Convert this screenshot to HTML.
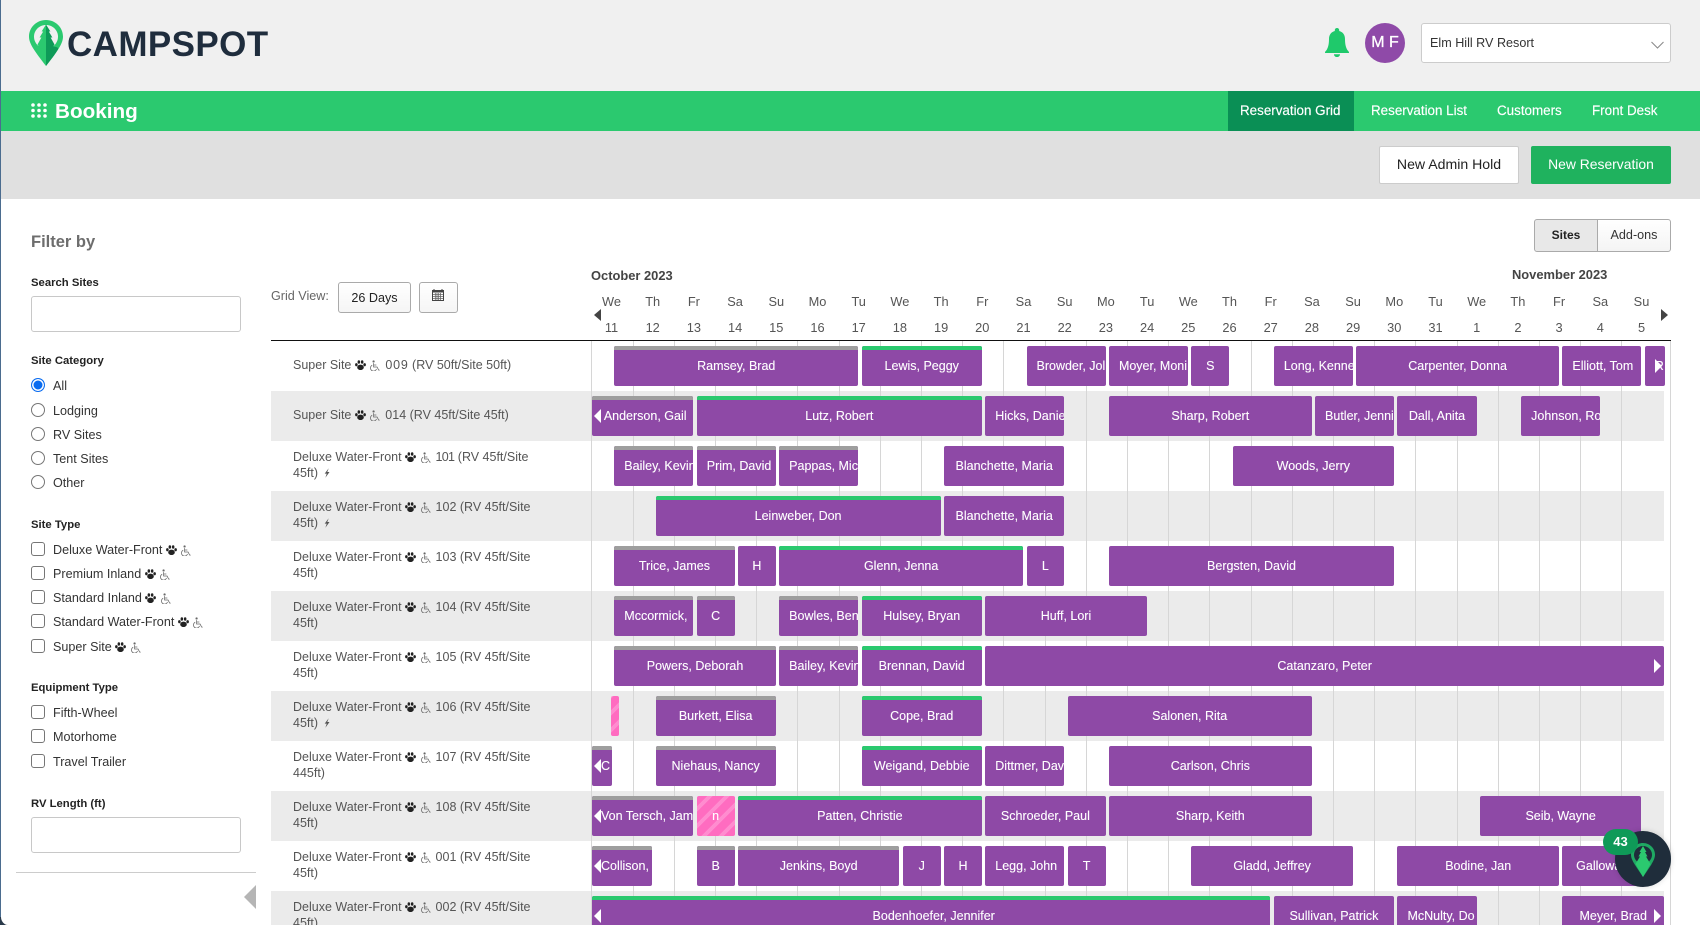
<!DOCTYPE html>
<html lang="en"><head><meta charset="utf-8"><title>Campspot Booking</title>
<style>
*{box-sizing:border-box}
html,body{margin:0;padding:0;width:1700px;height:925px;overflow:hidden}
body{position:relative;background:#fff;font-family:"Liberation Sans",sans-serif;font-size:12.6px;color:#333}
.a{position:absolute}
.t{position:absolute;white-space:nowrap;line-height:16px;height:16px}
.hd{left:1px;top:0;width:1699px;height:91px;background:#f0f0f0}
.gb{left:1px;top:91px;width:1699px;height:40px;background:#2bc96f}
.sb{left:1px;top:131px;width:1699px;height:68px;background:#e0e0e0}
.nav{color:#fff;font-size:13.4px;top:103px;-webkit-text-stroke:.15px #fff}
.btn{position:absolute;top:146px;height:38px;border-radius:2px;font:14.1px "Liberation Sans",sans-serif;text-align:center;padding:0 0 2px}
.lb{position:absolute;left:31px;font-weight:bold;font-size:11.3px;line-height:14px;height:14px;color:#222;white-space:nowrap}
.fi{position:absolute;left:31px;width:210px;height:36px;border:1px solid #c8c8c8;border-radius:3px;background:#fff;padding:0}
input[type=radio],input[type=checkbox]{appearance:none;-webkit-appearance:none;position:absolute;left:31px;width:14px;height:14px;margin:0;background:#fff;border:1px solid #767676}
input[type=radio]{border-radius:50%}
input[type=checkbox]{border-radius:3px}
input[type=radio]:checked{border:1.5px solid #0a6cf0;box-shadow:inset 0 0 0 1.5px #fff;background:#0a6cf0}
.o{position:absolute;left:53px;line-height:16px;height:16px;white-space:nowrap;color:#333}
.ic{display:inline-block;vertical-align:-1px}
.p{width:11px;height:10.5px;margin:0}
.w{width:11px;height:11.5px;margin:0 1.5px 0 0;vertical-align:-2px}
.z{width:6px;height:10px;margin-left:2px}
.d{position:absolute;width:40px;text-align:center;line-height:16px;color:#555;font-size:12.8px;margin-left:-20px;left:calc(611.5px + var(--i)*41.2px)}
.r{position:absolute;left:271px;width:1393px;height:50px}
.gr{background:#ebebeb}
.l{position:absolute;left:293px;line-height:16px;color:#555;white-space:nowrap;font-size:12.5px}
.v{position:absolute;top:341px;height:584px;width:1px;background:#d6d6d6;left:calc(591.4px + var(--i)*41.2px)}
.b{position:absolute;height:40px;top:var(--y);left:calc(614.3px + var(--s)*41.22px);width:calc((var(--e) - var(--s))*41.22px - 3.4px);background:#8e49a6;border-radius:2px;color:#fff;line-height:40px;text-align:center;white-space:nowrap;overflow:hidden;padding:0 10px;font-size:12.5px;-webkit-text-stroke:.1px #fff}
.g::before,.n::before{content:"";position:absolute;left:0;right:0;top:0;height:4px}
.g::before{background:#9e9e9e}
.n::before{background:#2bc96f}
.la{padding-left:9px;padding-right:4px}
.la::after{content:"";position:absolute;left:2px;top:13px;border:7px solid transparent;border-left:0;border-right:7px solid #fff}
.ra::after{content:"";position:absolute;right:3px;top:13px;border:7px solid transparent;border-right:0;border-left:7px solid #fff}
.k{background:#ff6cc0 repeating-linear-gradient(-45deg,#ff6cc0 0,#ff6cc0 8px,#ff8ccf 8px,#ff8ccf 12px)}
</style></head><body>
<svg width="0" height="0" style="position:absolute">
<defs>
<symbol id="paw" viewBox="0 0 12 11"><ellipse cx="6" cy="7.800" rx="3.600" ry="3" fill="#222"/><ellipse cx="1.500" cy="4.900" rx="1.400" ry="1.700" fill="#222"/><ellipse cx="4.200" cy="2" rx="1.400" ry="1.900" fill="#222"/><ellipse cx="7.800" cy="2" rx="1.400" ry="1.900" fill="#222"/><ellipse cx="10.500" cy="4.900" rx="1.400" ry="1.700" fill="#222"/></symbol>
<symbol id="whl" viewBox="0 0 12 12"><circle cx="5" cy="1.300" r="1.200" fill="#666"/><path d="M5 3.200V7.400H8.800L10.600 10.800H11.600M5 5.200H8M3.500 5.400A3.400 3.400 0 1 0 8.200 9.600" fill="none" stroke="#666" stroke-width=".8"/></symbol>
<symbol id="blt" viewBox="0 0 7 11"><path d="M5.500 0L.8 6.200H3.200L1.600 11 6.400 4.400H3.800z" fill="#555"/></symbol>
</defs></svg>

<div class="a" style="left:0;top:0;width:1px;height:925px;background:#4b6c8f"></div>
<svg class="a" style="left:0;top:917px" width="8" height="8"><path d="M0 0H1C1 4 4 8 8 8H0z" fill="#2a3a4a"/></svg>

<div class="a hd"></div>
<svg class="a" style="left:29px;top:20px" width="34" height="46" viewBox="0 0 34 46">
<path d="M17 0C7.600 0 0 7.400 0 16.600 0 24 6 31.500 17 46 28 31.500 34 24 34 16.600 34 7.400 26.400 0 17 0z" fill="#2bc96f"/>
<path d="M17 5C10.400 5 5 10.200 5 16.600c0 3.700 1.700 7 4.500 9.400H24.500c2.800-2.400 4.500-5.700 4.500-9.400C29 10.200 23.600 5 17 5z" fill="#f0f0f0"/>
<path d="M17 26V46C22 39.500 26 34.500 29 29.500 31 27 24 26 17 26z" fill="#0e9a58"/>
<path d="M17 4.500L12.600 11.500H14.200L10.600 17.500H12.400L8.500 24.500 11 28 17 30z" fill="#2bc96f"/>
<path d="M17 4.500L21.400 11.500H19.800L23.400 17.500H21.600L25.500 24.500 23 28 17 30z" fill="#0e9a58"/>
</svg>
<div class="t" style="left:67px;top:27px;height:36px;line-height:36px;font-size:35px;font-weight:bold;color:#1f2d3d;letter-spacing:.4px">CAMPSPOT</div>

<svg class="a" style="left:1325px;top:28px" width="24" height="29" viewBox="0 0 24 29"><path d="M12 0C10.700 0 9.800.900 9.800 2.200V3C6 4 4 7 4 11 4 17 2.800 20 1.600 22 1 23 0 23.400 0 24.400V25H24V24.400C24 23.400 23 23 22.400 22 21.200 20 20 17 20 11 20 7 18 4 14.200 3V2.200C14.200.900 13.300 0 12 0zM9 26.200H15C15 27.800 13.700 29 12 29S9 27.800 9 26.200z" fill="#1fc96b"/></svg>
<div class="a" style="left:1365px;top:23px;width:40px;height:40px;border-radius:50%;background:#8f4aa8;color:#fff;font-size:16px;line-height:40px;text-align:center;-webkit-text-stroke:.3px #fff">M F</div>
<div class="a" style="left:1421px;top:23px;width:250px;height:40px;background:#fff;border:1px solid #ccc;border-radius:3px"></div>
<div class="t" style="left:1430px;top:35px;color:#333">Elm Hill RV Resort</div>
<svg class="a" style="left:1651px;top:41px" width="13" height="8"><path d="M.5 1L6.500 7 12.500 1" fill="none" stroke="#888" stroke-width="1"/></svg>

<div class="a gb"></div>
<svg class="a" style="left:31px;top:103px" width="16" height="15"><g fill="#fff"><circle cx="2" cy="2" r="1.800"/><circle cx="8" cy="2" r="1.800"/><circle cx="14" cy="2" r="1.800"/><circle cx="2" cy="7.500" r="1.800"/><circle cx="8" cy="7.500" r="1.800"/><circle cx="14" cy="7.500" r="1.800"/><circle cx="2" cy="13" r="1.800"/><circle cx="8" cy="13" r="1.800"/><circle cx="14" cy="13" r="1.800"/></g></svg>
<div class="t" style="left:55px;top:99px;height:25px;line-height:25px;font-size:20.700px;font-weight:bold;color:#fff">Booking</div>
<div class="a" style="left:1228px;top:91px;width:126px;height:40px;background:#0a8f55"></div>
<div class="t nav" style="left:1240px">Reservation Grid</div>
<div class="t nav" style="left:1371px">Reservation List</div>
<div class="t nav" style="left:1497px">Customers</div>
<div class="t nav" style="left:1592px">Front Desk</div>

<div class="a sb"></div>
<button class="btn" style="left:1379px;width:140px;background:#fff;border:1px solid #ccc;color:#222">New Admin Hold</button>
<button class="btn" style="left:1531px;width:140px;background:#1fb25e;border:0;color:#fff;font-size:13.9px">New Reservation</button>

<div class="a" style="left:1534px;top:219px;width:64px;height:33px;background:#e8e8e8;border:1px solid #aaa;border-radius:3px 0 0 3px;font-weight:bold;font-size:12px;line-height:31px;text-align:center;color:#222">Sites</div>
<div class="a" style="left:1597px;top:219px;width:74px;height:33px;background:linear-gradient(#fff,#f4f4f4);border:1px solid #aaa;border-radius:0 3px 3px 0;line-height:31px;text-align:center;color:#333">Add-ons</div>

<div class="t" style="left:31px;top:232px;height:20px;line-height:20px;font-size:16.500px;font-weight:bold;color:#6d6d6d">Filter by</div>
<div class="lb" style="top:276px">Search Sites</div>
<input class="fi" type="text" style="top:296px">
<div class="lb" style="top:354px">Site Category</div>
<input type="radio" name="c" checked style="top:378px"><div class="o" style="top:378px">All</div>
<input type="radio" name="c" style="top:403px"><div class="o" style="top:403px">Lodging</div>
<input type="radio" name="c" style="top:427px"><div class="o" style="top:427px">RV Sites</div>
<input type="radio" name="c" style="top:451px"><div class="o" style="top:451px">Tent Sites</div>
<input type="radio" name="c" style="top:475px"><div class="o" style="top:475px">Other</div>
<div class="lb" style="top:518px">Site Type</div>
<input type="checkbox" style="top:542px"><div class="o" style="top:542px">Deluxe Water-Front <svg class="ic p"><use href="#paw"/></svg> <svg class="ic w"><use href="#whl"/></svg></div>
<input type="checkbox" style="top:566px"><div class="o" style="top:566px">Premium Inland <svg class="ic p"><use href="#paw"/></svg> <svg class="ic w"><use href="#whl"/></svg></div>
<input type="checkbox" style="top:590px"><div class="o" style="top:590px">Standard Inland <svg class="ic p"><use href="#paw"/></svg> <svg class="ic w"><use href="#whl"/></svg></div>
<input type="checkbox" style="top:614px"><div class="o" style="top:614px">Standard Water-Front <svg class="ic p"><use href="#paw"/></svg> <svg class="ic w"><use href="#whl"/></svg></div>
<input type="checkbox" style="top:639px"><div class="o" style="top:639px">Super Site <svg class="ic p"><use href="#paw"/></svg> <svg class="ic w"><use href="#whl"/></svg></div>
<div class="lb" style="top:681px">Equipment Type</div>
<input type="checkbox" style="top:705px"><div class="o" style="top:705px">Fifth-Wheel</div>
<input type="checkbox" style="top:729px"><div class="o" style="top:729px">Motorhome</div>
<input type="checkbox" style="top:754px"><div class="o" style="top:754px">Travel Trailer</div>
<div class="lb" style="top:797px">RV Length (ft)</div>
<input class="fi" type="text" style="top:817px">
<div class="a" style="left:16px;top:872px;width:240px;height:1px;background:#ccc"></div>
<div class="a" style="left:244px;top:885px;border:12px solid transparent;border-left:0;border-right:12px solid #b5b5b5"></div>

<div class="t" style="left:271px;top:288px;color:#666">Grid View:</div>
<div class="a" style="left:338px;top:282px;width:73px;height:31px;background:linear-gradient(#fff,#f5f5f5);border:1px solid #aaa;border-radius:3px;line-height:31px;text-align:center;color:#222">26 Days</div>
<div class="a" style="left:419px;top:282px;width:39px;height:31px;background:linear-gradient(#fff,#f5f5f5);border:1px solid #aaa;border-radius:3px"></div>
<svg class="a" style="left:432px;top:289px" width="12" height="12" viewBox="0 0 12 12"><rect x=".5" y="1.500" width="11" height="10" fill="#fff" stroke="#444"/><rect x="0" y="1" width="12" height="2.500" fill="#444"/><path d="M2 0V2M10 0V2" stroke="#444"/><path d="M3.300 4V11M5 4V11M6.700 4V11M8.500 4V11M1 5.500H11M1 7.500H11M1 9.500H11" stroke="#666" stroke-width=".8"/></svg>

<div class="t" style="left:591px;top:268px;font-weight:bold;font-size:12.900px;color:#444">October 2023</div>
<div class="t" style="left:1512px;top:267px;font-weight:bold;font-size:12.900px;color:#444">November 2023</div>

<div style="position:absolute;left:0;top:294px;width:1700px;height:16px">
<div class="d" style="--i:0">We</div><div class="d" style="--i:1">Th</div><div class="d" style="--i:2">Fr</div><div class="d" style="--i:3">Sa</div><div class="d" style="--i:4">Su</div><div class="d" style="--i:5">Mo</div><div class="d" style="--i:6">Tu</div><div class="d" style="--i:7">We</div><div class="d" style="--i:8">Th</div><div class="d" style="--i:9">Fr</div><div class="d" style="--i:10">Sa</div><div class="d" style="--i:11">Su</div><div class="d" style="--i:12">Mo</div><div class="d" style="--i:13">Tu</div><div class="d" style="--i:14">We</div><div class="d" style="--i:15">Th</div><div class="d" style="--i:16">Fr</div><div class="d" style="--i:17">Sa</div><div class="d" style="--i:18">Su</div><div class="d" style="--i:19">Mo</div><div class="d" style="--i:20">Tu</div><div class="d" style="--i:21">We</div><div class="d" style="--i:22">Th</div><div class="d" style="--i:23">Fr</div><div class="d" style="--i:24">Sa</div><div class="d" style="--i:25">Su</div>
</div>
<div style="position:absolute;left:0;top:320px;width:1700px;height:16px">
<div class="d" style="--i:0">11</div><div class="d" style="--i:1">12</div><div class="d" style="--i:2">13</div><div class="d" style="--i:3">14</div><div class="d" style="--i:4">15</div><div class="d" style="--i:5">16</div><div class="d" style="--i:6">17</div><div class="d" style="--i:7">18</div><div class="d" style="--i:8">19</div><div class="d" style="--i:9">20</div><div class="d" style="--i:10">21</div><div class="d" style="--i:11">22</div><div class="d" style="--i:12">23</div><div class="d" style="--i:13">24</div><div class="d" style="--i:14">25</div><div class="d" style="--i:15">26</div><div class="d" style="--i:16">27</div><div class="d" style="--i:17">28</div><div class="d" style="--i:18">29</div><div class="d" style="--i:19">30</div><div class="d" style="--i:20">31</div><div class="d" style="--i:21">1</div><div class="d" style="--i:22">2</div><div class="d" style="--i:23">3</div><div class="d" style="--i:24">4</div><div class="d" style="--i:25">5</div>
</div>
<div class="a" style="left:594px;top:309px;border:6.500px solid transparent;border-left:0;border-right:7px solid #444"></div>
<div class="a" style="left:1661px;top:309px;border:6.500px solid transparent;border-right:0;border-left:7px solid #444"></div>

<div class="r gr" style="top:391px"></div><div class="r gr" style="top:491px"></div><div class="r gr" style="top:591px"></div><div class="r gr" style="top:691px"></div><div class="r gr" style="top:791px"></div><div class="r gr" style="top:891px;height:34px"></div>
<div class="a" style="left:271px;top:340px;width:1400px;height:1px;background:#111"></div>

<div class="v" style="--i:0"></div><div class="v" style="--i:1"></div><div class="v" style="--i:2"></div><div class="v" style="--i:3"></div><div class="v" style="--i:4"></div><div class="v" style="--i:5"></div><div class="v" style="--i:6"></div><div class="v" style="--i:7"></div><div class="v" style="--i:8"></div><div class="v" style="--i:9"></div><div class="v" style="--i:10"></div><div class="v" style="--i:11"></div><div class="v" style="--i:12"></div><div class="v" style="--i:13"></div><div class="v" style="--i:14"></div><div class="v" style="--i:15"></div><div class="v" style="--i:16"></div><div class="v" style="--i:17"></div><div class="v" style="--i:18"></div><div class="v" style="--i:19"></div><div class="v" style="--i:20"></div><div class="v" style="--i:21"></div><div class="v" style="--i:22"></div><div class="v" style="--i:23"></div><div class="v" style="--i:24"></div><div class="v" style="--i:25"></div>
<div class="a" style="left:1670px;top:341px;height:584px;width:1px;background:#d6d6d6"></div>

<div class="l" style="top:357px">Super Site <svg class="ic p"><use href="#paw"/></svg> <svg class="ic w"><use href="#whl"/></svg> <span style="letter-spacing:.8px">009</span> (RV 50ft/Site 50ft)</div>
<div class="l" style="top:407px">Super Site <svg class="ic p"><use href="#paw"/></svg> <svg class="ic w"><use href="#whl"/></svg> 014 (RV 45ft/Site 45ft)</div>
<div class="l" style="top:449px">Deluxe Water-Front <svg class="ic p"><use href="#paw"/></svg> <svg class="ic w"><use href="#whl"/></svg> <span style="letter-spacing:-.7px">101</span> (RV 45ft/Site<br>45ft) <svg class="ic z"><use href="#blt"/></svg></div>
<div class="l" style="top:499px">Deluxe Water-Front <svg class="ic p"><use href="#paw"/></svg> <svg class="ic w"><use href="#whl"/></svg> 102 (RV 45ft/Site<br>45ft) <svg class="ic z"><use href="#blt"/></svg></div>
<div class="l" style="top:549px">Deluxe Water-Front <svg class="ic p"><use href="#paw"/></svg> <svg class="ic w"><use href="#whl"/></svg> 103 (RV 45ft/Site<br>45ft)</div>
<div class="l" style="top:599px">Deluxe Water-Front <svg class="ic p"><use href="#paw"/></svg> <svg class="ic w"><use href="#whl"/></svg> 104 (RV 45ft/Site<br>45ft)</div>
<div class="l" style="top:649px">Deluxe Water-Front <svg class="ic p"><use href="#paw"/></svg> <svg class="ic w"><use href="#whl"/></svg> 105 (RV 45ft/Site<br>45ft)</div>
<div class="l" style="top:699px">Deluxe Water-Front <svg class="ic p"><use href="#paw"/></svg> <svg class="ic w"><use href="#whl"/></svg> 106 (RV 45ft/Site<br>45ft) <svg class="ic z"><use href="#blt"/></svg></div>
<div class="l" style="top:749px">Deluxe Water-Front <svg class="ic p"><use href="#paw"/></svg> <svg class="ic w"><use href="#whl"/></svg> 107 (RV 45ft/Site<br>445ft)</div>
<div class="l" style="top:799px">Deluxe Water-Front <svg class="ic p"><use href="#paw"/></svg> <svg class="ic w"><use href="#whl"/></svg> 108 (RV 45ft/Site<br>45ft)</div>
<div class="l" style="top:849px">Deluxe Water-Front <svg class="ic p"><use href="#paw"/></svg> <svg class="ic w"><use href="#whl"/></svg> 001 (RV 45ft/Site<br>45ft)</div>
<div class="l" style="top:899px">Deluxe Water-Front <svg class="ic p"><use href="#paw"/></svg> <svg class="ic w"><use href="#whl"/></svg> 002 (RV 45ft/Site<br>45ft)</div>

<div style="--y:346px">
<div class="b g" style="--s:0;--e:6">Ramsey, Brad</div><div class="b n" style="--s:6;--e:9">Lewis, Peggy</div><div class="b" style="--s:10;--e:12">Browder, Jol</div><div class="b" style="--s:12;--e:14">Moyer, Moni</div><div class="b" style="--s:14;--e:15">S</div><div class="b" style="--s:16;--e:18">Long, Kenne</div><div class="b" style="--s:18;--e:23">Carpenter, Donna</div><div class="b" style="--s:23;--e:25">Elliott, Tom</div><div class="b ra" style="--s:25;--e:25.55">R</div>
</div>
<div style="--y:396px">
<div class="b g la" style="--s:-.541;--e:2">Anderson, Gail</div><div class="b n" style="--s:2;--e:9">Lutz, Robert</div><div class="b" style="--s:9;--e:11">Hicks, Danie</div><div class="b" style="--s:12;--e:17">Sharp, Robert</div><div class="b" style="--s:17;--e:19">Butler, Jenni</div><div class="b" style="--s:19;--e:21">Dall, Anita</div><div class="b" style="--s:22;--e:24">Johnson, Ro</div>
</div>
<div style="--y:446px">
<div class="b g" style="--s:0;--e:2">Bailey, Kevin</div><div class="b g" style="--s:2;--e:4">Prim, David</div><div class="b g" style="--s:4;--e:6">Pappas, Mic</div><div class="b" style="--s:8;--e:11">Blanchette, Maria</div><div class="b" style="--s:15;--e:19">Woods, Jerry</div>
</div>
<div style="--y:496px">
<div class="b n" style="--s:1;--e:8">Leinweber, Don</div><div class="b" style="--s:8;--e:11">Blanchette, Maria</div>
</div>
<div style="--y:546px">
<div class="b g" style="--s:0;--e:3">Trice, James</div><div class="b" style="--s:3;--e:4">H</div><div class="b n" style="--s:4;--e:10">Glenn, Jenna</div><div class="b" style="--s:10;--e:11">L</div><div class="b" style="--s:12;--e:19">Bergsten, David</div>
</div>
<div style="--y:596px">
<div class="b g" style="--s:0;--e:2">Mccormick,</div><div class="b g" style="--s:2;--e:3">C</div><div class="b g" style="--s:4;--e:6">Bowles, Ben</div><div class="b n" style="--s:6;--e:9">Hulsey, Bryan</div><div class="b" style="--s:9;--e:13">Huff, Lori</div>
</div>
<div style="--y:646px">
<div class="b g" style="--s:0;--e:4">Powers, Deborah</div><div class="b g" style="--s:4;--e:6">Bailey, Kevin</div><div class="b n" style="--s:6;--e:9">Brennan, David</div><div class="b ra" style="--s:9;--e:25.55">Catanzaro, Peter</div>
</div>
<div style="--y:696px">
<div class="b k" style="--s:-.08;--e:.2;padding:0"></div><div class="b g" style="--s:1;--e:4">Burkett, Elisa</div><div class="b n" style="--s:6;--e:9">Cope, Brad</div><div class="b" style="--s:11;--e:17">Salonen, Rita</div>
</div>
<div style="--y:746px">
<div class="b g la" style="--s:-.541;--e:.02">C</div><div class="b g" style="--s:1;--e:4">Niehaus, Nancy</div><div class="b n" style="--s:6;--e:9">Weigand, Debbie</div><div class="b" style="--s:9;--e:11">Dittmer, Dav</div><div class="b" style="--s:12;--e:17">Carlson, Chris</div>
</div>
<div style="--y:796px">
<div class="b g la" style="--s:-.541;--e:2">Von Tersch, Jam</div><div class="b k" style="--s:2;--e:3">n</div><div class="b n" style="--s:3;--e:9">Patten, Christie</div><div class="b" style="--s:9;--e:12">Schroeder, Paul</div><div class="b" style="--s:12;--e:17">Sharp, Keith</div><div class="b" style="--s:21;--e:25">Seib, Wayne</div>
</div>
<div style="--y:846px">
<div class="b g la" style="--s:-.541;--e:1">Collison,</div><div class="b g" style="--s:2;--e:3">B</div><div class="b g" style="--s:3;--e:7">Jenkins, Boyd</div><div class="b" style="--s:7;--e:8">J</div><div class="b" style="--s:8;--e:9">H</div><div class="b" style="--s:9;--e:11">Legg, John</div><div class="b" style="--s:11;--e:12">T</div><div class="b" style="--s:14;--e:18">Gladd, Jeffrey</div><div class="b" style="--s:19;--e:23">Bodine, Jan</div><div class="b" style="--s:23;--e:25">Galloway</div>
</div>
<div style="--y:896px">
<div class="b n la" style="--s:-.541;--e:16">Bodenhoefer, Jennifer</div><div class="b" style="--s:16;--e:19">Sullivan, Patrick</div><div class="b" style="--s:19;--e:21">McNulty, Do</div><div class="b ra" style="--s:23;--e:25.55">Meyer, Brad</div>
</div>

<div class="a" style="left:1615px;top:831px;width:56px;height:56px;border-radius:50%;background:#1f2d3b;box-shadow:0 0 6px rgba(0,0,0,.15)"></div>
<svg class="a" style="left:1631px;top:843px" width="24" height="34" viewBox="0 0 24 34">
<path d="M12 0C5.400 0 0 5.200 0 11.800 0 17 4 22 12 34 20 22 24 17 24 11.800 24 5.200 18.600 0 12 0z" fill="#1fa863"/>
<path d="M12 3C7 3 3 7 3 11.800 3 14.500 4.200 16.900 6.200 18.500H17.800C19.800 16.900 21 14.500 21 11.800 21 7 17 3 12 3z" fill="#1f2d3b"/>
<path d="M12 3L8.500 9H10L7.500 13.500H9L6.300 18 4.500 21 12 34 19.500 21 17.700 18 15 13.500H16.500L14 9H15.500z" fill="#2bc96f"/>
</svg>
<div class="a" style="left:1603px;top:829px;width:35px;height:26px;border-radius:13px;background:#0f9a58;color:#fff;font-weight:bold;font-size:13px;line-height:26px;text-align:center">43</div>
</body></html>
